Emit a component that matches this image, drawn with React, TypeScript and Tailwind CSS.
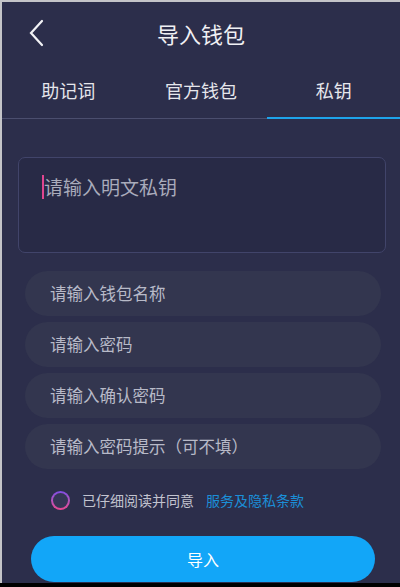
import React from "react";

const tabs = ["助记词", "官方钱包", "私钥"];
const fields = ["请输入钱包名称", "请输入密码", "请输入确认密码", "请输入密码提示（可不填）"];

const App = () => {
  const [active, setActive] = React.useState(2);
  const [agree, setAgree] = React.useState(false);

  return (
    <div
      className="w-full h-[587px] bg-black overflow-hidden"
      style={{ fontFamily: '"Noto Sans CJK SC", "Noto Sans", sans-serif' }}
    >
      <div className="h-[583px] bg-[#2c2e4b] border-t-2 border-l-2 border-[#c4c4c8] flex flex-col">
        {/* header */}
        <div className="h-[62px] flex items-center relative">
          <button className="absolute left-[24px] top-[15px] text-white">
            <svg width="22" height="32" viewBox="0 0 22 32" fill="none">
              <path d="M16 4 L5 16 L16 28" stroke="#f2f2f5" strokeWidth="2.2" strokeLinecap="round" />
            </svg>
          </button>
          <h1 className="w-full text-center text-[22px] text-[#f0f0f4]">导入钱包</h1>
        </div>

        {/* tabs */}
        <div className="flex border-b border-[#4b4e6e] h-[55px]">
          {tabs.map((t, i) => (
            <button
              key={t}
              onClick={() => setActive(i)}
              className={
                "flex-1 text-[18px] text-[#e6e6ec] pb-[1px] " +
                (active === i ? "border-b-2 border-[#1ea3ea] -mb-[1px]" : "")
              }
            >
              {t}
            </button>
          ))}
        </div>

        <div className="pl-[16px] pr-[14px] pt-[38px]">
          <div className="h-[96px] rounded-[7px] border border-[#41446a] bg-[#282a46] px-[23px] pt-[15px] flex">
            <span className="w-[2px] h-[24px] bg-[#e0458f] mt-[2px]"></span>
            <span className="text-[19px] text-[#a9abbb]">请输入明文私钥</span>
          </div>
        </div>

        <div className="pl-[23px] pr-[19px] pt-[18px] flex flex-col gap-[6px]">
          {fields.map((f) => (
            <div key={f} className="h-[45px] rounded-full bg-[#33364f] flex items-center pl-[25px] text-[16.5px] text-[#b8bac8]">
              {f}
            </div>
          ))}
        </div>

        <div className="flex items-center pl-[49px] mt-[14px] h-[34px] text-[14px]">
          <button
            onClick={() => setAgree(!agree)}
            className="w-[19px] h-[19px] rounded-full p-[2px] bg-gradient-to-b from-[#7e4be6] to-[#e8458f]"
          >
            <span className={"block w-full h-full rounded-full " + (agree ? "bg-[#e8458f]" : "bg-[#343656]")}></span>
          </button>
          <span className="ml-[12px] text-[#c2c3cf]">已仔细阅读并同意</span>
          <span className="ml-[12px] text-[#1b8fd8]">服务及隐私条款</span>
        </div>

        <div className="pl-[29px] pr-[25px] mt-[19px]">
          <button className="w-full h-[46px] rounded-full bg-[#12a6f8] text-white text-[16px]">导入</button>
        </div>
      </div>
    </div>
  );
};

export default App;
